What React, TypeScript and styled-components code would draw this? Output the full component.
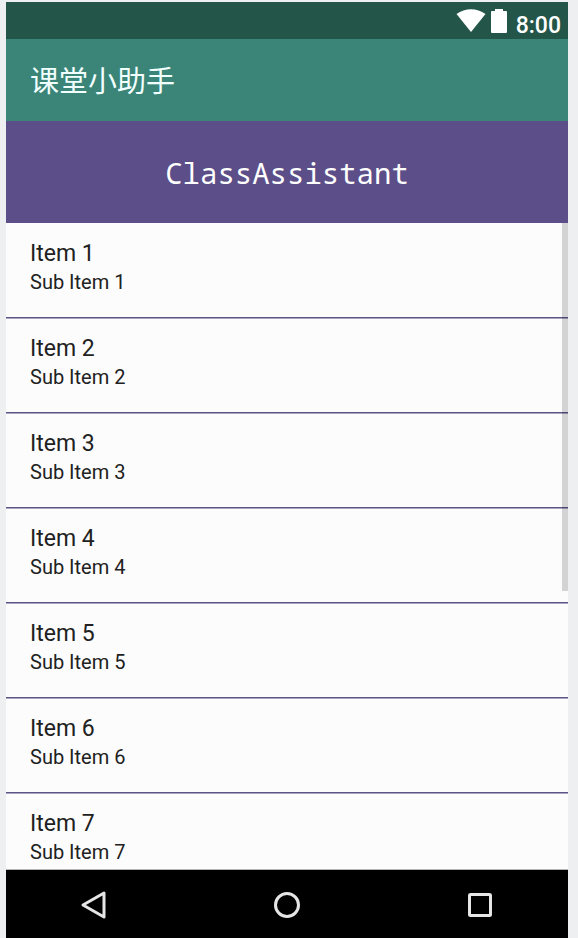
import React from 'react';
import styled, { createGlobalStyle } from 'styled-components';

const GlobalStyle = createGlobalStyle`
  *, *::before, *::after { box-sizing: border-box; }
  body {
    margin: 0;
    background: #eeeff0;
    font-family: Roboto, "Noto Sans CJK SC", sans-serif;
  }
`;

const Screen = styled.div`
  display: flex;
  flex-direction: column;
  height: 100vh;
  padding: 2px 10px 0 6px;
`;

const StatusBar = styled.div`
  display: flex;
  flex: none;
  justify-content: flex-end;
  align-items: flex-start;
  height: 37px;
  padding: 6px 7px 0 0;
  background: #245549;
  color: #fff;
`;

const StatusIcon = styled.svg`
  display: block;
  flex: none;
  margin-right: 5px;
`;

const Clock = styled.time`
  margin-left: 4px;
  font-size: 23px;
  line-height: 36px;
  font-weight: 500;
`;

const AppBar = styled.header`
  display: flex;
  flex: none;
  align-items: center;
  height: 82px;
  padding: 0 24px 2px;
  background: #3a8577;
`;

const AppTitle = styled.h1`
  margin: 0;
  color: #f2ffff;
  font: 400 29px/40px "Noto Sans CJK SC", sans-serif;
`;

const Banner = styled.div`
  display: flex;
  flex: none;
  align-items: center;
  justify-content: center;
  height: 102px;
  padding-top: 2px;
  background: #5c4f89;
`;

const BannerTitle = styled.h2`
  margin: 0;
  color: #fff;
  font: 400 29px/40px "Droid Sans Mono", "Noto Sans Mono", "DejaVu Sans Mono", monospace;
`;

const ListArea = styled.main`
  position: relative;
  flex: 1;
  min-height: 0;
  overflow: hidden;
  background: #fcfcfc;
  border-bottom: 1px solid #b5b7b7;
`;

const ItemList = styled.ul`
  margin: 0;
  padding: 0;
  list-style: none;
`;

const Item = styled.li`
  height: 95px;
  padding: 16px 24px 0;
  border-bottom: 1px solid #5c5486;
  box-shadow: 0 1px 0 #a9a4bf;
  color: #212121;
`;

const Primary = styled.div`
  font-size: 23px;
  line-height: 30px;
`;

const Secondary = styled.div`
  font-size: 20px;
  line-height: 26px;
`;

const ScrollThumb = styled.div`
  position: absolute;
  top: 0;
  right: 0;
  width: 6px;
  height: 57%;
  background: rgba(0, 0, 0, 0.16);
`;

const NavBar = styled.nav`
  display: grid;
  flex: none;
  grid-template-columns: repeat(3, 193px);
  justify-content: center;
  height: 68px;
  background: #000;
`;

const NavButton = styled.button`
  display: grid;
  place-items: center;
  padding: 2px 0 0;
  border: 0;
  background: none;
  cursor: pointer;
`;

const NavIcon = styled.svg`
  display: block;
  fill: none;
  stroke: #e6e6e6;
  stroke-width: 3;
  stroke-linejoin: round;
`;

const items = [1, 2, 3, 4, 5, 6, 7];

export default function App() {
  return (
    <>
      <GlobalStyle />
      <Screen>
        <StatusBar>
          <StatusIcon width="30" height="24" viewBox="0 0 30 24" aria-hidden="true">
            <path d="M.5 6C9-.5 21-.5 29.500 6L15 24Z" fill="currentColor" />
          </StatusIcon>
          <StatusIcon width="16" height="25" viewBox="0 0 16 25" aria-hidden="true">
            <path d="M4 1h8v2h3q1 0 1 1v20q0 1-1 1H1q-1 0-1-1V4q0-1 1-1h3Z" fill="currentColor" />
          </StatusIcon>
          <Clock>8:00</Clock>
        </StatusBar>
        <AppBar>
          <AppTitle>课堂小助手</AppTitle>
        </AppBar>
        <Banner>
          <BannerTitle>ClassAssistant</BannerTitle>
        </Banner>
        <ListArea>
          <ItemList>
            {items.map((n) => (
              <Item key={n}>
                <Primary>Item {n}</Primary>
                <Secondary>Sub Item {n}</Secondary>
              </Item>
            ))}
          </ItemList>
          <ScrollThumb />
        </ListArea>
        <NavBar>
          <NavButton aria-label="Back">
            <NavIcon width="28" height="30" viewBox="0 0 28 30">
              <path d="M24 3V27L3 15Z" />
            </NavIcon>
          </NavButton>
          <NavButton aria-label="Home">
            <NavIcon width="28" height="28" viewBox="0 0 28 28">
              <circle cx="14" cy="14" r="11.500" />
            </NavIcon>
          </NavButton>
          <NavButton aria-label="Recent apps">
            <NavIcon width="28" height="28" viewBox="0 0 28 28">
              <rect x="3.500" y="3.500" width="21" height="21" rx="1" />
            </NavIcon>
          </NavButton>
        </NavBar>
      </Screen>
    </>
  );
}
